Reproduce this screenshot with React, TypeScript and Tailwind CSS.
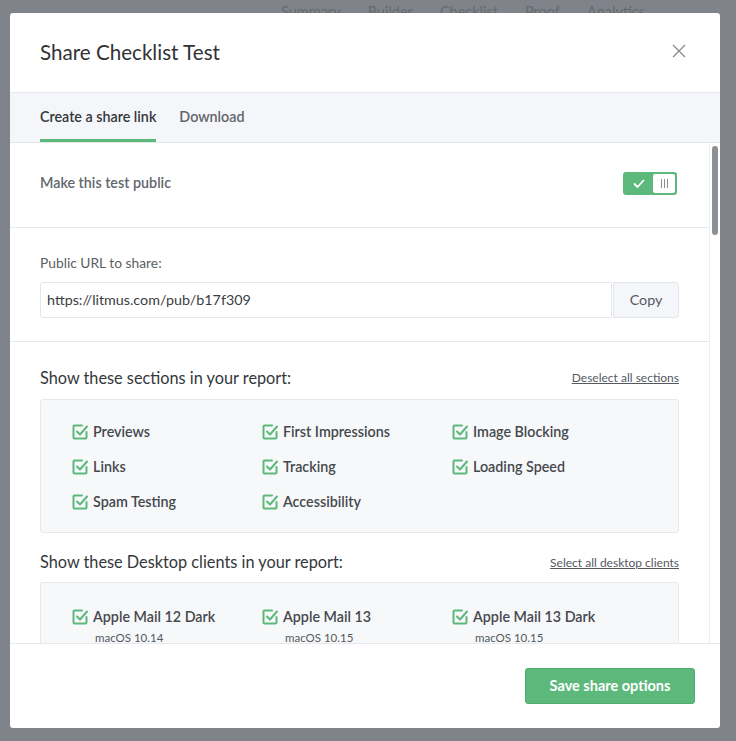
import React from "react";

const font = { fontFamily: '"Lato", "Open Sans", "Liberation Sans", sans-serif' };

function CheckIcon() {
  return (
    <svg width="18" height="18" viewBox="0 0 18 18" fill="none" className="shrink-0">
      <path d="M11 2.5H3.5a1 1 0 0 0-1 1v11a1 1 0 0 0 1 1h11a1 1 0 0 0 1-1V9" stroke="#5cb97b" strokeWidth="2" strokeLinecap="round" />
      <path d="M6 8.5l3 3 7-8" stroke="#5cb97b" strokeWidth="2" strokeLinecap="round" strokeLinejoin="round" />
    </svg>
  );
}

function Item({ label, sub }: { label: string; sub?: string }) {
  return (
    <div className="flex flex-col">
      <div className="flex items-center gap-[4px]">
        <CheckIcon />
        <span className="text-[14.3px] font-semibold text-[#45484d] leading-[18px]">{label}</span>
      </div>
      {sub && <div className="pl-[24px] text-[11.5px] text-[#55585d] mt-[3px]">{sub}</div>}
    </div>
  );
}

export default function App() {
  const sections = [
    "Previews",
    "First Impressions",
    "Image Blocking",
    "Links",
    "Tracking",
    "Loading Speed",
    "Spam Testing",
    "Accessibility",
  ];
  return (
    <div className="relative w-[736px] h-[741px] bg-[#80848a] overflow-hidden" style={font}>
      <div className="absolute top-0 left-0 w-full h-[13px] overflow-hidden">
        <div className="flex gap-[27px] pl-[281px] pt-[2px] text-[14.5px] text-[#656a70] leading-[20px]">
          <span>Summary</span>
          <span>Builder</span>
          <span>Checklist</span>
          <span>Proof</span>
          <span>Analytics</span>
        </div>
      </div>
      <div className="absolute left-[10px] top-[13px] w-[710px] h-[715px] bg-white rounded-[3px] flex flex-col overflow-hidden">
        <div className="h-[80px] shrink-0 flex items-center justify-between px-[30px] border-b border-[#e6e8eb]">
          <h1 className="text-[20.6px] text-[#303236] font-normal">Share Checklist Test</h1>
          <svg width="14" height="14" viewBox="0 0 14 14" className="mr-[4px] -mt-[4px]">
            <path d="M1 1l12 12M13 1L1 13" stroke="#8a8d92" strokeWidth="1.4" />
          </svg>
        </div>
        <div className="h-[50px] shrink-0 bg-[#f4f6f9] border-b border-[#e3e6ea] flex items-end px-[30px] gap-[23px]">
          <div className="flex flex-col">
            <span className="text-[14.3px] font-semibold text-[#33363a] pb-[12px]">Create a share link</span>
            <div className="h-[3px] bg-[#5cb97b]" />
          </div>
          <span className="text-[14.3px] font-semibold text-[#61656b] pb-[15px]">Download</span>
        </div>
        <div className="flex-1 flex min-h-0 overflow-hidden">
          <div className="w-[700px] border-r border-[#eceef0] flex flex-col">
            <div className="h-[85px] shrink-0 flex items-center justify-between px-[30px] border-b border-[#e6e8eb]">
              <span className="text-[14.3px] font-semibold text-[#62666c] -mt-[4px]">Make this test public</span>
              <div className="w-[54px] h-[23px] rounded-[3px] bg-[#5cb97b] flex items-center p-[2px] mr-[2px] -mt-[3px]">
                <div className="flex-1 flex justify-center">
                  <svg width="12" height="10" viewBox="0 0 12 10">
                    <path d="M1.5 5l3 3 6-6.5" stroke="white" strokeWidth="1.8" fill="none" strokeLinecap="round" strokeLinejoin="round" />
                  </svg>
                </div>
                <div className="w-[22px] h-[19px] bg-white rounded-[2px] flex items-center justify-center gap-[2px]">
                  <div className="w-[1px] h-[9px] bg-[#8a8d92]" />
                  <div className="w-[1px] h-[9px] bg-[#8a8d92]" />
                  <div className="w-[1px] h-[9px] bg-[#8a8d92]" />
                </div>
              </div>
            </div>
            <div className="h-[114px] shrink-0 px-[30px] pt-[25px] border-b border-[#e6e8eb]">
              <div className="text-[13.8px] text-[#5a5e64] leading-[19px]">Public URL to share:</div>
              <div className="flex mt-[10px] w-[639px]">
                <div className="flex-1 h-[36px] border border-[#e3e6ea] rounded-l-[3px] flex items-center px-[6px] text-[14.3px] text-[#3a3d42]">
                  https://litmus.com/pub/b17f309
                </div>
                <div className="w-[66px] h-[36px] ml-[1px] border border-[#e3e6ea] bg-[#f4f6f9] rounded-r-[3px] flex items-center justify-center text-[14.3px] text-[#55595f]">
                  Copy
                </div>
              </div>
            </div>
            <div className="px-[30px] pt-[24px]">
              <div className="flex items-center justify-between w-[639px]">
                <span className="text-[16.3px] text-[#34373b]">Show these sections in your report:</span>
                <span className="text-[12px] text-[#55595f] underline">Deselect all sections</span>
              </div>
              <div className="mt-[9px] w-[639px] h-[134px] bg-[#f7f8fa] border border-[#e6e8eb] rounded-[3px] pl-[30px] pt-[23px] grid grid-cols-[190px_190px_190px] auto-rows-[35px]">
                {sections.map((s) => (
                  <Item key={s} label={s} />
                ))}
              </div>
              <div className="flex items-center justify-between w-[639px] mt-[17px]">
                <span className="text-[16.3px] text-[#34373b]">Show these Desktop clients in your report:</span>
                <span className="text-[12px] text-[#55595f] underline">Select all desktop clients</span>
              </div>
              <div className="mt-[7px] w-[639px] h-[120px] bg-[#f7f8fa] border border-[#e6e8eb] rounded-[3px] pl-[30px] pt-[25px] grid grid-cols-[190px_190px_190px]">
                <Item label="Apple Mail 12 Dark" sub="macOS 10.14" />
                <Item label="Apple Mail 13" sub="macOS 10.15" />
                <Item label="Apple Mail 13 Dark" sub="macOS 10.15" />
              </div>
            </div>
          </div>
          <div className="w-[10px] relative">
            <div className="mx-auto mt-[3px] w-[6px] h-[89px] rounded-full bg-[#8c8f93]" />
          </div>
        </div>
        <div className="h-[85px] shrink-0 border-t border-[#e6e8eb] flex items-center justify-end pr-[25px]">
          <button className="w-[170px] h-[36px] rounded-[3px] bg-[#5cb97b] border border-[#4fae6e] text-white text-[14.5px] font-bold -mt-[1px]">
            Save share options
          </button>
        </div>
      </div>
    </div>
  );
}
